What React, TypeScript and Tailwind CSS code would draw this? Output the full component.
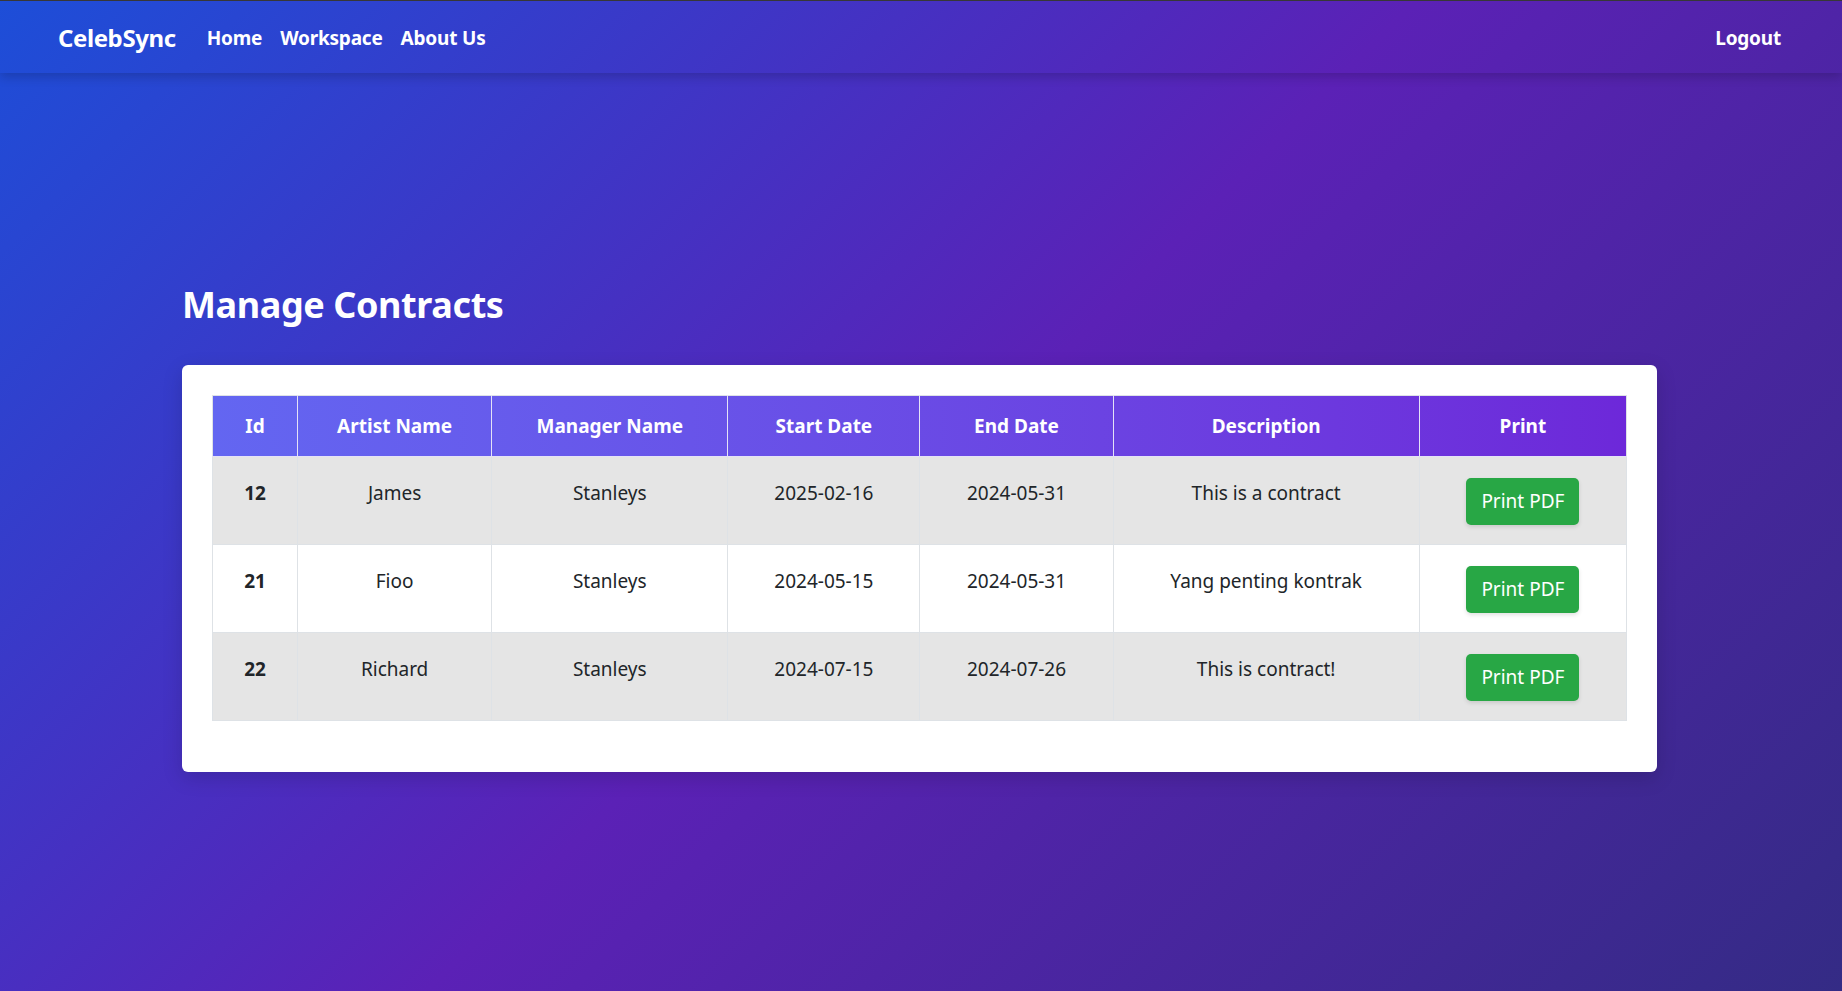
import React from "react";

type Contract = {
  id: number;
  artist: string;
  manager: string;
  start: string;
  end: string;
  description: string;
};

const contracts: Contract[] = [
  { id: 12, artist: "James", manager: "Stanleys", start: "2025-02-16", end: "2024-05-31", description: "This is a contract" },
  { id: 21, artist: "Fioo", manager: "Stanleys", start: "2024-05-15", end: "2024-05-31", description: "Yang penting kontrak" },
  { id: 22, artist: "Richard", manager: "Stanleys", start: "2024-07-15", end: "2024-07-26", description: "This is contract!" },
];

const columns = ["Id", "Artist Name", "Manager Name", "Start Date", "End Date", "Description", "Print"];

const cell = "border border-[#dee2e6] px-3 pt-[22px] pb-[19px] align-top leading-[1.5]";

function Navbar() {
  return (
    <nav className="flex h-[72px] items-center justify-between px-[58px] pt-[2px] shadow-[0_4px_10px_rgba(0,0,0,0.18)]">
      <div className="flex items-center">
        <a href="#" className="mr-[31px] text-[24px] font-bold tracking-[-0.4px] text-white">
          CelebSync
        </a>
        <div className="flex items-center gap-[18px] text-[19px] font-bold tracking-[-0.2px] text-white">
          <a href="#">Home</a>
          <a href="#">Workspace</a>
          <a href="#">About Us</a>
        </div>
      </div>
      <a href="#" className="mr-[3px] text-[19px] font-bold tracking-[-0.2px] text-white">
        Logout
      </a>
    </nav>
  );
}

export default function App() {
  return (
    <div
      className="flex min-h-screen flex-col border-t border-[#3a3a3a] bg-[linear-gradient(135deg,#1d4ed8_0%,#5b21b6_50%,#342b85_100%)] text-[#212529]"
      style={{ fontFamily: '"Segoe UI", "Noto Sans", "Open Sans", sans-serif' }}
    >
      <Navbar />
      <main className="flex flex-1 justify-center pr-[3px] pt-[210px]">
        <div className="w-[1475px]">
          <h1 className="mb-[39px] text-[36px] font-bold leading-[1.2] tracking-[-0.4px] text-white">Manage Contracts</h1>
          <div className="rounded-[6px] bg-white p-[30px] pb-[51px] shadow-[0_6px_20px_rgba(0,0,0,0.15)]">
            <table className="w-full table-fixed border-collapse text-center text-[19px]">
              <colgroup>
                <col className="w-[85px]" />
                <col className="w-[194px]" />
                <col className="w-[236px]" />
                <col className="w-[192px]" />
                <col className="w-[193px]" />
                <col className="w-[306px]" />
                <col className="w-[207px]" />
              </colgroup>
              <thead className="bg-gradient-to-r from-[#6366f1] to-[#6d28d9]">
                <tr className="h-[61px]">
                  {columns.map((c) => (
                    <th
                      key={c}
                      className="border border-[#e4e2f7] border-t-[#dee2e6] px-3 font-bold leading-[1.5] text-white first:border-l-[#dee2e6] last:border-r-[#dee2e6]"
                    >
                      {c}
                    </th>
                  ))}
                </tr>
              </thead>
              <tbody>
                {contracts.map((c, i) => (
                  <tr key={c.id} className={i % 2 === 0 ? "bg-[#e5e5e5]" : "bg-white"}>
                    <td className={`${cell} font-bold`}>{c.id}</td>
                    <td className={cell}>{c.artist}</td>
                    <td className={cell}>{c.manager}</td>
                    <td className={cell}>{c.start}</td>
                    <td className={cell}>{c.end}</td>
                    <td className={cell}>{c.description}</td>
                    <td className="border border-[#dee2e6] px-3 pt-[21px] pb-[19px] align-top">
                      <button
                        type="button"
                        className="h-[47px] w-[113px] rounded-[5px] bg-[#28a745] text-[19px] leading-[1.5] text-white shadow-[0_2px_4px_rgba(0,0,0,0.12)]"
                      >
                        Print PDF
                      </button>
                    </td>
                  </tr>
                ))}
              </tbody>
            </table>
          </div>
        </div>
      </main>
    </div>
  );
}
